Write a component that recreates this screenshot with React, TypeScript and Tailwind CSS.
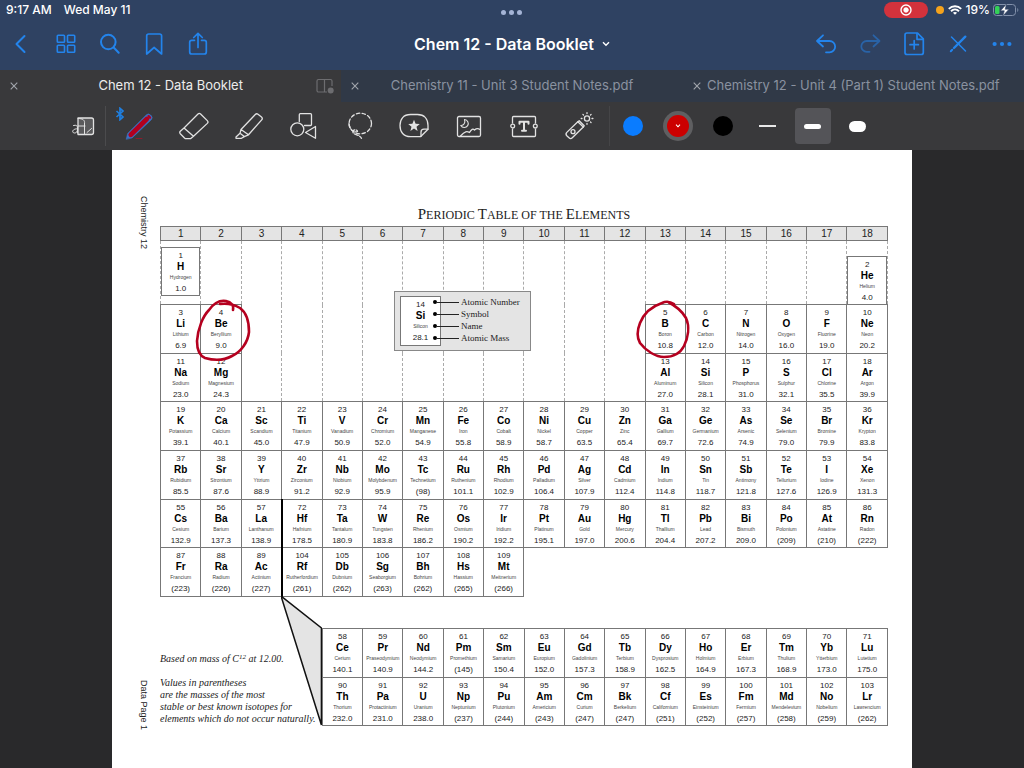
import React from "react";

type Cell = [number, string, string, string];

const parse = (rows: string): Cell[] =>
  rows.split("|").map((item) => {
    const [n, symbol, name, mass] = item.trim().split(" ");
    return [Number(n), symbol, name, mass];
  });

const hydrogen: Cell = [1, "H", "Hydrogen", "1.0"];
const helium: Cell = [2, "He", "Helium", "4.0"];

const period2 = parse(
  "3 Li Lithium 6.9|4 Be Beryllium 9.0|5 B Boron 10.8|6 C Carbon 12.0|7 N Nitrogen 14.0|8 O Oxygen 16.0|9 F Fluorine 19.0|10 Ne Neon 20.2"
);
const period3 = parse(
  "11 Na Sodium 23.0|12 Mg Magnesium 24.3|13 Al Aluminum 27.0|14 Si Silicon 28.1|15 P Phosphorus 31.0|16 S Sulphur 32.1|17 Cl Chlorine 35.5|18 Ar Argon 39.9"
);
const period4 = parse(
  "19 K Potassium 39.1|20 Ca Calcium 40.1|21 Sc Scandium 45.0|22 Ti Titanium 47.9|23 V Vanadium 50.9|24 Cr Chromium 52.0|25 Mn Manganese 54.9|26 Fe Iron 55.8|27 Co Cobalt 58.9|28 Ni Nickel 58.7|29 Cu Copper 63.5|30 Zn Zinc 65.4|31 Ga Gallium 69.7|32 Ge Germanium 72.6|33 As Arsenic 74.9|34 Se Selenium 79.0|35 Br Bromine 79.9|36 Kr Krypton 83.8"
);
const period5 = parse(
  "37 Rb Rubidium 85.5|38 Sr Strontium 87.6|39 Y Yttrium 88.9|40 Zr Zirconium 91.2|41 Nb Niobium 92.9|42 Mo Molybdenum 95.9|43 Tc Technetium (98)|44 Ru Ruthenium 101.1|45 Rh Rhodium 102.9|46 Pd Palladium 106.4|47 Ag Silver 107.9|48 Cd Cadmium 112.4|49 In Indium 114.8|50 Sn Tin 118.7|51 Sb Antimony 121.8|52 Te Tellurium 127.6|53 I Iodine 126.9|54 Xe Xenon 131.3"
);
const period6 = parse(
  "55 Cs Cesium 132.9|56 Ba Barium 137.3|57 La Lanthanum 138.9|72 Hf Hafnium 178.5|73 Ta Tantalum 180.9|74 W Tungsten 183.8|75 Re Rhenium 186.2|76 Os Osmium 190.2|77 Ir Iridium 192.2|78 Pt Platinum 195.1|79 Au Gold 197.0|80 Hg Mercury 200.6|81 Tl Thallium 204.4|82 Pb Lead 207.2|83 Bi Bismuth 209.0|84 Po Polonium (209)|85 At Astatine (210)|86 Rn Radon (222)"
);
const period7 = parse(
  "87 Fr Francium (223)|88 Ra Radium (226)|89 Ac Actinium (227)|104 Rf Rutherfordium (261)|105 Db Dubnium (262)|106 Sg Seaborgium (263)|107 Bh Bohrium (262)|108 Hs Hassium (265)|109 Mt Meitnerium (266)"
);
const lanthanides = parse(
  "58 Ce Cerium 140.1|59 Pr Praseodymium 140.9|60 Nd Neodymium 144.2|61 Pm Promethium (145)|62 Sm Samarium 150.4|63 Eu Europium 152.0|64 Gd Gadolinium 157.3|65 Tb Terbium 158.9|66 Dy Dysprosium 162.5|67 Ho Holmium 164.9|68 Er Erbium 167.3|69 Tm Thulium 168.9|70 Yb Ytterbium 173.0|71 Lu Lutetium 175.0"
);
const actinides = parse(
  "90 Th Thorium 232.0|91 Pa Protactinium 231.0|92 U Uranium 238.0|93 Np Neptunium (237)|94 Pu Plutonium (244)|95 Am Americium (243)|96 Cm Curium (247)|97 Bk Berkelium (247)|98 Cf Californium (251)|99 Es Einsteinium (252)|100 Fm Fermium (257)|101 Md Mendelevium (258)|102 No Nobelium (259)|103 Lr Lawrencium (262)"
);

const Element = ({ data }: { data: Cell }) => (
  <div className="flex flex-col items-center text-[8px] leading-[11px] text-[#222] pt-0.5">
    <span>{data[0]}</span>
    <b className="text-[10px] text-black">{data[1]}</b>
    <span className="text-[5px] text-[#444]">{data[2]}</span>
    <span>{data[3]}</span>
  </div>
);

const solid = "border border-[#777] p-0 align-top";

const Cells = ({ items }: { items: Cell[] }) => (
  <>
    {items.map((item) => (
      <td
        key={item[0]}
        className={
          item[0] === 57 || item[0] === 89
            ? "border border-[#777] border-r-2 border-r-black p-0 align-top"
            : solid
        }
      >
        <Element data={item} />
      </td>
    ))}
  </>
);

const Empty = ({ from, to, span }: { from: number; to: number; span: number }) => (
  <>
    {Array.from({ length: to - from + 1 }, (_, i) => (
      <td
        key={from + i}
        rowSpan={span}
        className="border-x border-dashed border-[#aaa] p-0"
      ></td>
    ))}
  </>
);

const Icon = ({
  children,
  className = "size-[30px]",
}: {
  children: React.ReactNode;
  className?: string;
}) => (
  <svg
    viewBox="0 0 30 30"
    className={className}
    fill="none"
    stroke="currentColor"
    strokeWidth="1.3"
    strokeLinecap="round"
    strokeLinejoin="round"
    aria-hidden="true"
  >
    {children}
  </svg>
);

const navLeft = [
  {
    label: "Back",
    icon: <path d="M17.5 7 L9.5 15 L17.5 23" strokeWidth="2" />,
  },
  {
    label: "Documents",
    icon: (
      <g strokeWidth="1.6">
        <rect x="6.3" y="6.3" width="7.2" height="7" rx="0.8" />
        <rect x="16.5" y="6.3" width="7.2" height="7" rx="0.8" />
        <rect x="6.3" y="16.3" width="7.2" height="7" rx="0.8" />
        <rect x="16.5" y="16.3" width="7.2" height="7" rx="0.8" />
      </g>
    ),
  },
  {
    label: "Search",
    icon: (
      <g strokeWidth="2">
        <circle cx="13.3" cy="13" r="7.3" />
        <path d="M18.7 18.5 L23.7 23.7" />
      </g>
    ),
  },
  {
    label: "Bookmark",
    icon: (
      <path
        d="M7.7 25 V7 a2 2 0 0 1 2-2 H20.6 a2 2 0 0 1 2 2 V25 L15.1 18.5 Z"
        strokeWidth="1.7"
      />
    ),
  },
  {
    label: "Share",
    icon: (
      <g strokeWidth="1.7">
        <path d="M11.5 11.3 H8.7 a2 2 0 0 0 -2 2 V23 a2 2 0 0 0 2 2 H21.3 a2 2 0 0 0 2-2 V13.3 a2 2 0 0 0 -2-2 H18.5" />
        <path d="M15 18.5 V4.5 M10.7 8.5 L15 4.3 L19.3 8.5" />
      </g>
    ),
  },
];

const navRight = [
  {
    label: "Undo",
    icon: (
      <path
        d="M12 6.3 L6 12 L12 17.5 M6.3 12 H18.5 a5.6 5.6 0 0 1 0 11.3 H15"
        strokeWidth="1.8"
      />
    ),
  },
  {
    label: "Redo",
    icon: (
      <path
        d="M18.5 6.3 L24.5 12 L18.5 17.5 M24 12 H11.7 a5.3 5.3 0 0 0 0 10.8 H14.5"
        strokeWidth="1.8"
        opacity="0.5"
      />
    ),
  },
  {
    label: "Add page",
    icon: (
      <g strokeWidth="1.7">
        <path d="M8 4 H18.5 L24.3 9.8 V23.5 a2 2 0 0 1 -2 2 H8 a2 2 0 0 1 -2-2 V6 a2 2 0 0 1 2-2 Z" />
        <path d="M18 4.5 V10.3 H24 M15.2 11.5 V20 M11 15.7 H19.4" />
      </g>
    ),
  },
  {
    label: "Read only",
    icon: (
      <g>
        <path d="M22.3 7.7 L11 19" strokeWidth="2.4" />
        <path d="M9.2 20.8 L7.8 22.2" strokeWidth="2" />
        <path d="M8.5 8 L22.5 22" strokeWidth="1.5" />
      </g>
    ),
  },
  {
    label: "More",
    icon: (
      <g fill="currentColor" stroke="none">
        <circle cx="7.6" cy="15" r="2.1" />
        <circle cx="15" cy="15" r="2.1" />
        <circle cx="22.4" cy="15" r="2.1" />
      </g>
    ),
  },
];

const tools = [
  {
    label: "Pen",
    icon: (
      <>
        <path d="M2.3 28 L3.6 22.5 L22.2 4 a3 3 0 0 1 4.3 0 l.6 .6 a3 3 0 0 1 0 4.3 L8.3 26.7 Z" fill="#3b6fc4" stroke="#3b74c4" strokeWidth="0.6" />
        <path d="M6.8 23.7 L22.8 8" stroke="#b3001e" strokeWidth="4.8" />
        <path d="M24.6 5.2 L26 6.6" stroke="#b3001e" strokeWidth="2.4" />
        <path d="M12 27.5 H18" stroke="#8d1b2c" strokeWidth="1" />
      </>
    ),
  },
  {
    label: "Eraser",
    icon: (
      <path d="M5 17 L19 3 a2 2 0 0 1 2.6 0 L28.3 9.6 a2 2 0 0 1 0 2.8 L14.5 25.3 L5 17 L1.3 20.3 a1.8 1.8 0 0 0 0 2.4 L5.5 27 a2.5 2.5 0 0 0 1.7 .7 H11.5 L14.5 25.3" />
    ),
  },
  {
    label: "Highlighter",
    icon: (
      <path d="M7 18.5 L21.3 3.5 a2 2 0 0 1 2.7 -.2 L27.5 6 a2 2 0 0 1 .2 2.8 L14.5 23.8 L7 18.5 L6 22.3 L10.3 25.6 L14.5 23.8 M6 22.3 L2 26 V27.3 H7.5 L10.3 25.6" />
    ),
  },
  {
    label: "Shapes",
    icon: (
      <>
        <path d="M10.3 10.5 V3.7 a1 1 0 0 1 1-1 H21.5 a1 1 0 0 1 1 1 V13.5 a1 1 0 0 1 -1 1 H15.5" />
        <circle cx="8.3" cy="18.3" r="6.5" />
        <path d="M16.5 21.5 L26.5 15.5 V27.3 Z" />
      </>
    ),
  },
  {
    label: "Lasso",
    icon: (
      <>
        <ellipse cx="16.3" cy="12.5" rx="11.2" ry="10.3" strokeDasharray="3.4 2.4" />
        <path d="M5 12.5 C5 18 10 22 13.5 20.5 C13.5 18 8 18.5 9 21.5 C10 24 15 23 17.5 27.3" strokeDasharray="4 1.6" />
      </>
    ),
  },
  {
    label: "Elements",
    icon: (
      <>
        <path d="M21.5 25.7 H11.5 C4.5 25.7 1 21 1 14.5 C1 8 4.5 3.5 11.5 3.5 H18.5 C25.5 3.5 29 8 29 14.5 V18.2 L21.5 25.7 Z" />
        <path d="M29 18.2 H25 a3 3 0 0 0 -3 3 V25.3" />
        <path
          d="M15 8.8 L16.6 12.8 L20.8 13 L17.5 15.8 L18.6 19.9 L15 17.6 L11.4 19.9 L12.5 15.8 L9.2 13 L13.4 12.8 Z"
          fill="currentColor"
          stroke="none"
        />
      </>
    ),
  },
  {
    label: "Image",
    icon: (
      <>
        <rect x="3.5" y="5.5" width="23" height="20" rx="1.5" />
        <path d="M10.5 8.5 a4 4 0 1 1 -3.7 6 c3 .3 4.8-2.8 3.7-6 Z" strokeWidth="1.1" />
        <path d="M6.5 25 C11 20 13 20 15.5 21.5 C17.5 18 19 17.3 20.5 19 C22.5 17.3 24.5 17.5 26 18.5" />
      </>
    ),
  },
  {
    label: "Text",
    icon: (
      <>
        <path d="M3.5 12 V6.5 a1 1 0 0 1 1-1 H25.5 a1 1 0 0 1 1 1 V12 M3.5 18 V24.5 a1 1 0 0 0 1 1 H25.5 a1 1 0 0 0 1-1 V18" />
        <circle cx="3.7" cy="15" r="1.9" />
        <circle cx="26.3" cy="15" r="1.9" />
        <path d="M10.5 12.7 V10.8 H19.5 V12.7 M15 10.8 V19.8 M13 19.8 H17" strokeWidth="2" />
      </>
    ),
  },
  {
    label: "Laser pointer",
    icon: (
      <>
        <path d="M13.8 10.8 L19.3 16 L8.3 26.8 a2.4 2.4 0 0 1 -3.3 0 L2.8 24.7 a2.4 2.4 0 0 1 0-3.3 Z" />
        <circle cx="9" cy="20.7" r="2" />
        <path d="M13.8 10.8 L15.2 9.7 L20.2 14.8 L19.3 16" />
        <circle cx="23" cy="7.5" r="2.6" />
        <path d="M23 1.7 V2.6 M23 12.4 V13.3 M17.2 7.5 H18 M28 7.5 H28.9 M18.9 3.4 L19.5 4 M26.5 11 L27.1 11.6 M27.1 3.4 L26.5 4" />
      </>
    ),
  },
];

const tabs = [
  "Chem 12 - Data Booklet",
  "Chemistry 11 - Unit 3 Student Notes.pdf",
  "Chemistry 12 - Unit 4 (Part 1) Student Notes.pdf",
];

const StatusBar = () => (
  <div className="grid grid-cols-3 items-center h-5 text-xs font-medium text-white">
    <div className="flex gap-3 pl-1.5">
      <span>9:17 AM</span>
      <span>Wed May 11</span>
    </div>
    <div className="flex justify-center gap-[3px] pt-1">
      <i className="size-[5px] rounded-full bg-[#a5b4d6]"></i>
      <i className="size-[5px] rounded-full bg-[#a5b4d6]"></i>
      <i className="size-[5px] rounded-full bg-[#a5b4d6]"></i>
    </div>
    <div className="flex items-center justify-end pr-1">
      <div className="flex items-center justify-center w-11 h-4 mr-2 rounded-full bg-[#d3323c]">
        <Icon className="size-3">
          <circle cx="15" cy="15" r="12.5" strokeWidth="3.5" />
          <circle cx="15" cy="15" r="6" fill="currentColor" />
        </Icon>
      </div>
      <i className="size-2 mr-1 rounded-full bg-[#f5a31c]"></i>
      <svg viewBox="0 0 14 10" className="w-3.5 h-2.5 mr-1" fill="none" stroke="currentColor" strokeWidth="1.9" aria-hidden="true">
        <path d="M0.8 3.8 C4.3 0.3 9.7 0.3 13.2 3.8" />
        <path d="M3 6.2 C5.3 4 8.7 4 11 6.2" />
        <path d="M7 9.8 L4.9 7.7 C6.1 6.6 7.9 6.6 9.1 7.7 Z" fill="currentColor" stroke="none" />
      </svg>
      <span>19%</span>
      <svg viewBox="0 0 28 14" className="w-7 h-3.5 ml-0.5" fill="none" aria-hidden="true">
        <rect x="1.5" y="1.5" width="22" height="11" rx="3" stroke="#8291ab" />
        <path d="M25.3 5 a2.5 2.5 0 0 1 0 4 Z" fill="#8291ab" />
        <rect x="3" y="3" width="4.5" height="8" rx="1.5" fill="#34d158" />
        <path d="M14.5 1 L8.5 7.8 H12.3 L10.8 13 L17 6.2 H13.2 Z" fill="#fff" stroke="#2f4262" strokeWidth="0.6" />
      </svg>
    </div>
  </div>
);

const Header = () => (
  <header className="bg-[#2f4262] pb-0.5">
    <StatusBar />
    <div className="flex items-center justify-between h-12 text-[#2384ec]">
      <div className="flex">
        {navLeft.map((item) => (
          <button key={item.label} aria-label={item.label} className="flex justify-center w-11">
            <Icon>{item.icon}</Icon>
          </button>
        ))}
      </div>
      <button className="flex items-center gap-2 text-base font-semibold text-white">
        Chem 12 - Data Booklet
        <svg viewBox="0 0 8 6" className="w-2 h-1.5" fill="none" stroke="currentColor" strokeWidth="1.4" aria-hidden="true">
          <path d="M1 1.2 L4 4.2 L7 1.2" />
        </svg>
      </button>
      <div className="flex">
        {navRight.map((item) => (
          <button key={item.label} aria-label={item.label} className="flex justify-center w-11">
            <Icon>{item.icon}</Icon>
          </button>
        ))}
      </div>
    </div>
  </header>
);

const Tabs = () => (
  <nav className="grid grid-cols-3 h-8 text-[13px]">
    {tabs.map((name, i) => (
      <div
        key={name}
        className={
          i === 0
            ? "flex items-center bg-[#39393b] text-[#ececec]"
            : "flex items-center bg-[#303947] text-[#8a92a0]"
        }
      >
        <button aria-label={"Close " + name} className="flex justify-center w-7 shrink-0 text-[#a2a6ad]">
          <svg viewBox="0 0 8 8" className="size-2" stroke="currentColor" strokeWidth="1.1" aria-hidden="true">
            <path d="M0.7 0.7 L7.3 7.3 M7.3 0.7 L0.7 7.3" />
          </svg>
        </button>
        <button className="flex justify-center flex-1 min-w-0 whitespace-nowrap">{name}</button>
        <div className="flex justify-center w-7 shrink-0">
          {i === 0 && (
            <svg viewBox="0 0 18 16" className="w-[18px] h-4 mr-1 shrink-0" fill="none" stroke="#6d6d70" strokeWidth="1.2" aria-hidden="true">
              <path d="M11 14 H2.5 a1.5 1.5 0 0 1 -1.5-1.5 V3 a1.5 1.5 0 0 1 1.5-1.5 H14.5 a1.5 1.5 0 0 1 1.5 1.5 V8 M8.5 1.5 V14" />
              <circle cx="14.7" cy="12.5" r="3" fill="#6d6d70" stroke="none" />
            </svg>
          )}
        </div>
      </div>
    ))}
  </nav>
);

const Toolbar = () => (
  <div className="flex items-center h-12 pl-[61px] bg-[#39393b] text-[#e2e2e2]">
    <button aria-label="Zoom window" className="flex justify-center w-11">
      <Icon>
        <path d="M10 7 H23.5 a2 2 0 0 1 2 2 V21.5 a2 2 0 0 1 -2 2 H10 Z" fill="#5a5a5c" />
        <path d="M10 7.5 C15 7.5 17 9 16.5 13 V23 M10 15 H17 M19 21.5 L23.5 17.5" strokeWidth="1" />
        <path d="M5.5 14.5 C8.5 13.5 9.5 15 9.5 17 V22 M9.5 17.8 C4 17.5 3.5 22 6.5 22 C8.5 22 9.5 20.5 9.5 19" strokeWidth="1" />
      </Icon>
    </button>
    <div className="w-px h-10 bg-[#4b4b4d]"></div>
    <div className="flex pl-[5px]">
      {tools.map((tool) => (
        <button key={tool.label} aria-label={tool.label} className="relative flex justify-center w-[55px]">
          <Icon>{tool.icon}</Icon>
          {tool.label === "Pen" && (
            <svg viewBox="0 0 10 14" className="absolute left-1 -top-1 w-2.5 h-3.5" fill="none" stroke="#1f7fe0" strokeWidth="1.7" aria-hidden="true">
              <path d="M1.5 4 L8 10 L5 12.7 V1.3 L8 4 L1.5 10" />
            </svg>
          )}
        </button>
      ))}
    </div>
    <div className="w-px h-10 ml-[3px] bg-[#454547]"></div>
    <div className="flex items-center">
      <button aria-label="Blue" className="flex justify-center w-[45px]">
        <i className="size-5 rounded-full bg-[#0a7cff]"></i>
      </button>
      <button aria-label="Red" className="flex justify-center w-[45px]">
        <i className="flex items-center justify-center size-[30px] rounded-full bg-[#5f5f61]">
          <i className="flex items-center justify-center size-[22px] rounded-full bg-[#cc0000] text-white">
            <svg viewBox="0 0 8 6" className="w-1.5 h-1" fill="none" stroke="currentColor" strokeWidth="1.6" aria-hidden="true">
              <path d="M1 1 L4 4.2 L7 1" />
            </svg>
          </i>
        </i>
      </button>
      <button aria-label="Black" className="flex justify-center w-[45px]">
        <i className="size-5 rounded-full bg-black"></i>
      </button>
      <button aria-label="Thin" className="flex justify-center w-[45px]">
        <i className="w-[17px] h-0.5 bg-[#e8e8e8]"></i>
      </button>
      <button aria-label="Medium" className="flex justify-center w-[45px]">
        <i className="flex items-center justify-center size-9 rounded bg-[#545458]">
          <i className="w-[17px] h-[5px] rounded-full bg-white"></i>
        </i>
      </button>
      <button aria-label="Thick" className="flex justify-center w-[45px]">
        <i className="w-[17px] h-[11px] rounded-full bg-white"></i>
      </button>
    </div>
  </div>
);

const legend = ["Atomic Number", "Symbol", "Name", "Atomic Mass"];

const Legend = () => (
  <div className="absolute top-[65px] left-[234px] flex w-[137px] h-[60px] p-1 pl-[5px] bg-[#e4e4e4] border border-[#888]">
    <div className="w-[41px] h-[50px] bg-white border border-[#777]">
      <Element data={[14, "Si", "Silicon", "28.1"]} />
    </div>
    <ul className="-ml-2 font-['Liberation_Serif',serif] text-[9px] leading-[12px] text-[#222]">
      {legend.map((text) => (
        <li key={text} className="flex items-center whitespace-nowrap">
          <i className="size-1 rounded-full bg-black"></i>
          <i className="w-[22px] h-px mr-0.5 bg-[#222]"></i>
          {text}
        </li>
      ))}
    </ul>
  </div>
);

const MainTable = () => (
  <table className="w-full h-[371px] table-fixed border-collapse">
    <thead>
      <tr className="h-[14px]">
        {Array.from({ length: 18 }, (_, i) => (
          <th
            key={i}
            className="h-[14px] p-0 border border-[#777] bg-[#e4e4e4] text-[10px] leading-[13px] font-normal text-[#222]"
          >
            {i + 1}
          </th>
        ))}
      </tr>
    </thead>
    <tbody>
      <tr className="h-16">
        <td className="p-0 pt-1.5 align-top border-x border-dashed border-[#aaa]">
          <div className="h-[49px] border border-[#777]">
            <Element data={hydrogen} />
          </div>
        </td>
        <Empty from={2} to={2} span={1} />
        <Empty from={3} to={12} span={3} />
        <Empty from={13} to={17} span={1} />
        <td className="p-0 align-bottom border-x border-dashed border-[#aaa]">
          <div className="h-12 border border-b-0 border-[#777]">
            <Element data={helium} />
          </div>
        </td>
      </tr>
      <tr>
        <Cells items={period2} />
      </tr>
      <tr>
        <Cells items={period3} />
      </tr>
      <tr>
        <Cells items={period4} />
      </tr>
      <tr>
        <Cells items={period5} />
      </tr>
      <tr>
        <Cells items={period6} />
      </tr>
      <tr>
        <Cells items={period7} />
      </tr>
    </tbody>
  </table>
);

const Notes = () => (
  <div className="relative w-2/9 shrink-0 pt-[25px] font-['Liberation_Serif',serif] italic text-[10px] leading-[12px] text-[#222] whitespace-nowrap">
    <svg
      viewBox="0 0 40 130"
      preserveAspectRatio="none"
      className="absolute right-0 -top-8 w-1/4 h-[130px]"
      aria-hidden="true"
    >
      <path d="M0 0 L40 32 V129 Z" fill="#e4e4e4" stroke="#111" strokeWidth="1.5" />
    </svg>
    <p className="relative">
      Based on mass of C<sup className="text-[7px]">12</sup> at 12.00.
    </p>
    <p className="relative pt-3">
      Values in parentheses
      <br />
      are the masses of the most
      <br />
      stable or best known isotopes for
      <br />
      elements which do not occur naturally.
    </p>
  </div>
);

const Ink = () => (
  <svg
    viewBox="0 0 728 500"
    className="absolute top-0 left-0 w-full pointer-events-none"
    fill="none"
    stroke="#b5001f"
    strokeWidth="2.6"
    strokeLinecap="round"
    strokeLinejoin="round"
    aria-hidden="true"
  >
    <path d="M60 78 C68 77 75 79 80 82 C87 87 89 97 89 106 C88 116 81 126 72 130 C63 135 52 134 45 132 C38 129 37 122 37 115 C38 102 43 90 49 84 C54 77 60 74 66 75 C71 76 74 79 73 84" />
    <path d="M508 76 C516 80 522 85 526 92 C530 101 528 112 524 120 C520 128 513 131 504 131 C496 131 486 125 480 117 C476 110 478 102 480 97 C484 87 493 80 502 77 C506 75 511 76 514 78" />
  </svg>
);

const Booklet = () => (
  <main className="flex flex-1 w-full max-w-[800px] pr-6 pb-8 mx-auto bg-white font-['Liberation_Sans',sans-serif]">
    <aside className="flex flex-col items-start justify-between h-[580px] w-12 pt-[46px] pl-[26px] shrink-0 text-[9px] leading-[12px] text-[#222]">
      <span className="[writing-mode:vertical-rl]">Chemistry 12</span>
      <span className="[writing-mode:vertical-rl]">Data Page 1</span>
    </aside>
    <div className="flex-1 min-w-0">
      <h1 className="pt-[55px] pb-0.5 text-center font-['Liberation_Serif',serif] text-[12px] leading-[18px] text-[#222]">
        <span className="text-[15px]">P</span>ERIODIC <span className="text-[15px]">T</span>ABLE OF THE{" "}
        <span className="text-[15px]">E</span>LEMENTS
      </h1>
      <div className="relative">
        <MainTable />
        <Legend />
        <Ink />
      </div>
      <div className="flex pt-[31px]">
        <Notes />
        <table className="w-7/9 h-[98px] table-fixed border-collapse">
          <tbody>
            <tr>
              <Cells items={lanthanides} />
            </tr>
            <tr>
              <Cells items={actinides} />
            </tr>
          </tbody>
        </table>
      </div>
    </div>
  </main>
);

const App = () => {
  return (
    <div className="flex flex-col min-h-screen bg-[#29292b] font-['Inter',sans-serif]">
      <Header />
      <Tabs />
      <Toolbar />
      <Booklet />
    </div>
  );
};

export default App;
